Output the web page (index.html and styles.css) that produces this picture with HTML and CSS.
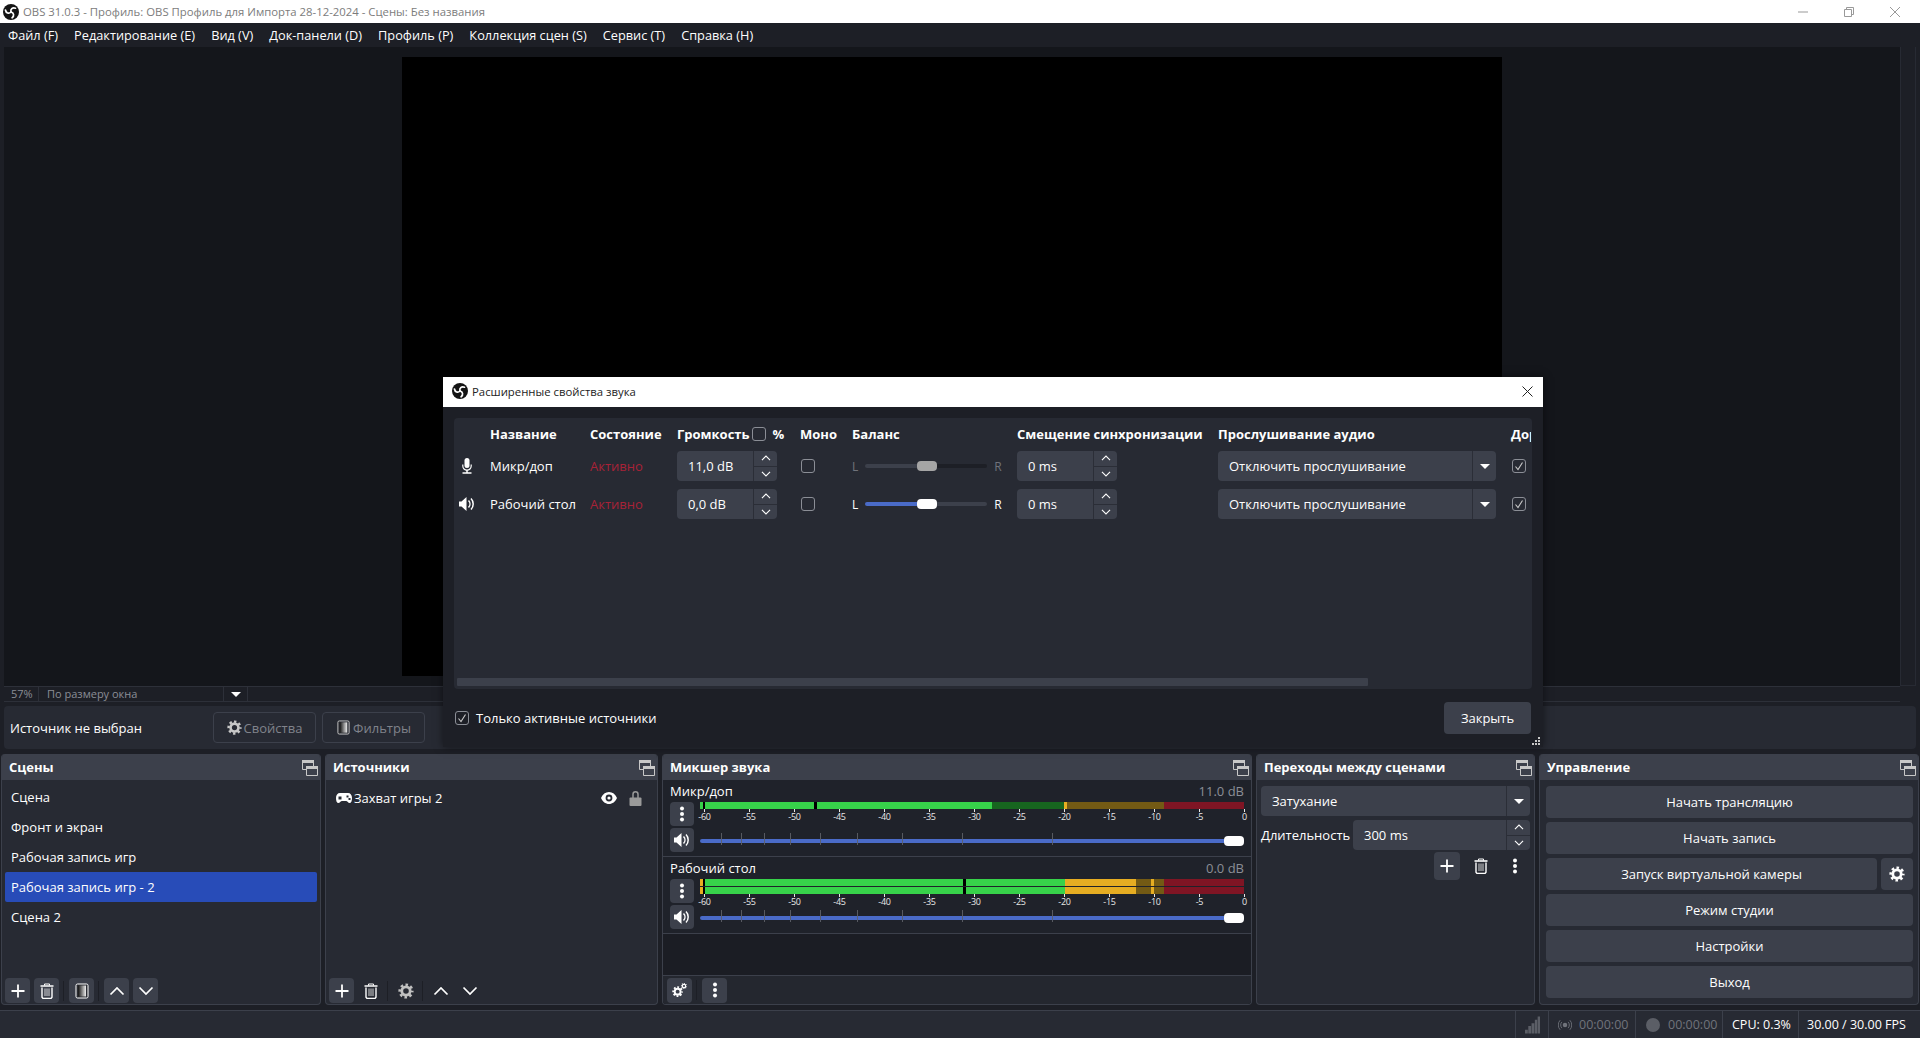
FILE: index.html
```html
<!DOCTYPE html>
<html lang="ru">
<head>
    <meta charset="UTF-8">
    <title>OBS 31.0.3</title>
    <link rel="stylesheet" href="styles.css">
</head>
<body>
    <svg class="sprites" xmlns="http://www.w3.org/2000/svg">
        <defs>
            <linearGradient id="filterFade" x1="0" x2="1" y1="0" y2="0">
                <stop offset="0" stop-color="#111"/>
                <stop offset="1" stop-color="#eee"/>
            </linearGradient>
            <symbol id="i-logo" viewBox="0 0 16 16">
                <circle cx="8" cy="8" r="8" fill="#141414"/>
                <g fill="none" stroke="#fff" stroke-width="1.700" stroke-linecap="round">
                    <path id="blade" d="M8 8C7.200 5.200 9.400 3 12.500 4.200"/>
                    <use href="#blade" transform="rotate(120 8 8)"/>
                    <use href="#blade" transform="rotate(240 8 8)"/>
                </g>
            </symbol>
            <symbol id="i-float" viewBox="0 0 16 16">
                <path d="M.5.5h11v9H.5z" fill="none" stroke="#c8c8c8"/>
                <path d="M0 0h12v3H0z" fill="#c8c8c8"/>
                <path d="M4.500 6.500h11v9h-11z" fill="#3c404b" stroke="#c8c8c8"/>
                <path d="M4 6h12v3H4z" fill="#c8c8c8"/>
            </symbol>
            <symbol id="i-gear" viewBox="0 0 16 16">
                <circle cx="8" cy="8" r="4.200" fill="none" stroke="currentColor" stroke-width="2.800"/>
                <circle cx="8" cy="8" r="6.300" fill="none" stroke="currentColor" stroke-width="2.600" stroke-dasharray="2.550 2.398" stroke-dashoffset="1.270"/>
            </symbol>
            <symbol id="i-gears" viewBox="0 0 20 20">
                <g transform="translate(0 5) scale(.88)">
                    <circle cx="8" cy="8" r="4.200" fill="none" stroke="currentColor" stroke-width="2.800"/>
                    <circle cx="8" cy="8" r="6.300" fill="none" stroke="currentColor" stroke-width="2.600" stroke-dasharray="2.550 2.398" stroke-dashoffset="1.270"/>
                </g>
                <g transform="translate(11 1) scale(.5)">
                    <circle cx="8" cy="8" r="4.200" fill="none" stroke="currentColor" stroke-width="2.800"/>
                    <circle cx="8" cy="8" r="6.300" fill="none" stroke="currentColor" stroke-width="2.600" stroke-dasharray="2.550 2.398" stroke-dashoffset="1.270"/>
                </g>
            </symbol>
            <symbol id="i-filter" viewBox="0 0 16 16">
                <rect x="2" y="1" width="12" height="14" rx="1.500" fill="#2a2c33" stroke="currentColor"/>
                <rect x="4" y="2.500" width="8" height="11" fill="url(#filterFade)"/>
            </symbol>
            <symbol id="i-plus" viewBox="0 0 16 16">
                <path d="M8 1.500v13M1.500 8h13" fill="none" stroke="currentColor" stroke-width="1.800"/>
            </symbol>
            <symbol id="i-trash" viewBox="0 0 16 16">
                <path d="M1.500 3h13" stroke="currentColor" stroke-width="1.600"/>
                <path d="M5.500 2.500V1h5v1.500" fill="none" stroke="currentColor"/>
                <path d="M3 4.500v9.800l1 1.200h8l1-1.200V4.500" fill="none" stroke="currentColor" stroke-width="1.400"/>
                <path d="M6 5.500v7.500M8 5.500v7.500M10 5.500v7.500" stroke="currentColor" stroke-width=".8"/>
            </symbol>
            <symbol id="i-up" viewBox="0 0 16 16">
                <path d="M1.500 11.500L8 5l6.500 6.500" fill="none" stroke="currentColor" stroke-width="1.700"/>
            </symbol>
            <symbol id="i-down" viewBox="0 0 16 16">
                <path d="M1.500 4.500L8 11l6.500-6.500" fill="none" stroke="currentColor" stroke-width="1.700"/>
            </symbol>
            <symbol id="i-dots" viewBox="0 0 16 16">
                <circle cx="8" cy="2.500" r="2" fill="currentColor"/>
                <circle cx="8" cy="8" r="2" fill="currentColor"/>
                <circle cx="8" cy="13.500" r="2" fill="currentColor"/>
            </symbol>
            <symbol id="i-speaker" viewBox="0 0 16 16">
                <path d="M0 5.500h2.500L7.500 1v14l-5-4.500H0z" fill="currentColor"/>
                <path d="M9.500 4.500a5 5 0 0 1 0 7M12 2.500a8 8 0 0 1 0 11" fill="none" stroke="currentColor" stroke-width="1.500"/>
            </symbol>
            <symbol id="i-mic" viewBox="0 0 16 16">
                <rect x="5.500" y="0" width="5" height="10" rx="2.500" fill="currentColor"/>
                <path d="M3.800 6.500v1.500a4.200 4.200 0 0 0 8.400 0V6.500" fill="none" stroke="currentColor" stroke-width="1.200"/>
                <path d="M8 12v2.500M3.500 15h9" stroke="currentColor" stroke-width="1.500"/>
            </symbol>
            <symbol id="i-eye" viewBox="0 0 16 12">
                <path fill-rule="evenodd" d="M8 0c3.500 0 6.400 2.300 8 6-1.600 3.700-4.500 6-8 6s-6.400-2.300-8-6c1.600-3.700 4.500-6 8-6zm0 2.600a3.400 3.400 0 1 0 0 6.800 3.400 3.400 0 0 0 0-6.800z" fill="currentColor"/>
                <circle cx="8" cy="6" r="1.600" fill="currentColor"/>
            </symbol>
            <symbol id="i-lock" viewBox="0 0 13 15">
                <path d="M4 7V3.300a2.500 2.500 0 0 1 5 0V7" fill="none" stroke="currentColor" stroke-width="1.500"/>
                <rect x="0.500" y="6.500" width="12" height="8.500" rx="1" fill="currentColor"/>
            </symbol>
            <symbol id="i-gamepad" viewBox="0 0 16 10">
                <path fill-rule="evenodd" d="M4 0h8c2.500 0 4 2 4 5s-.8 5-2.500 5c-1.400 0-2-2-3.500-2H6c-1.500 0-2.100 2-3.500 2C.8 10 0 8 0 5s1.500-5 4-5zM2.500 3.500v3h3v-3zM10.500 2.500v2h2v-2zM12.500 5v2h2V5z" fill="currentColor"/>
            </symbol>
            <symbol id="i-signal" viewBox="0 0 16 18">
                <path d="M0 14h3v4H0zM3.500 10h3v8h-3zM7 7h3v11H7zM10.500 3.500H13V18h-2.500zM13.500 0H16v18h-2.500z" fill="currentColor"/>
            </symbol>
            <symbol id="i-stream" viewBox="0 0 16 16">
                <circle cx="8" cy="8" r="2.600" fill="currentColor"/>
                <path d="M4.500 4.500a5 5 0 0 0 0 7M11.500 4.500a5 5 0 0 1 0 7M2.500 2.500a8 8 0 0 0 0 11M13.500 2.500a8 8 0 0 1 0 11" fill="none" stroke="currentColor"/>
            </symbol>
            <symbol id="i-check" viewBox="0 0 14 14">
                <path d="M3.500 7.500L6 10.500 10.500 3.500" fill="none" stroke="currentColor" stroke-width="1.100"/>
            </symbol>
        </defs>
    </svg>

    <div class="titlebar">
        <svg class="title-logo"><use href="#i-logo"/></svg>
        <span class="title-text">OBS 31.0.3 - Профиль: OBS Профиль для Импорта 28-12-2024 - Сцены: Без названия</span>
        <div class="window-btns">
            <span class="win-btn"><svg width="10" height="10"><path d="M0 5h10" stroke="#999"/></svg></span>
            <span class="win-btn"><svg width="10" height="10"><path d="M.5 2.500h7v7h-7zM2.500 2.500v-2h7v7h-2" fill="none" stroke="#999"/></svg></span>
            <span class="win-btn"><svg width="10" height="10"><path d="M0 0l10 10M10 0L0 10" stroke="#999"/></svg></span>
        </div>
    </div>

    <div class="menubar">
        <span>Файл (F)</span>
        <span>Редактирование (E)</span>
        <span>Вид (V)</span>
        <span>Док-панели (D)</span>
        <span>Профиль (P)</span>
        <span>Коллекция сцен (S)</span>
        <span>Сервис (T)</span>
        <span>Справка (H)</span>
    </div>

    <div class="preview">
        <div class="preview-area"><div class="canvas"></div></div>
        <div class="preview-scroll"></div>
    </div>

    <div class="scalebar">
        <span class="scale-pct">57%</span>
        <span class="scale-mode">По размеру окна</span>
        <span class="scale-arrow"><span class="caret"></span></span>
    </div>

    <div class="contextbar">
        <span class="context-label">Источник не выбран</span>
        <button class="context-btn"><svg class="icon-15"><use href="#i-gear"/></svg>Свойства</button>
        <button class="context-btn"><svg class="icon-15"><use href="#i-filter"/></svg>Фильтры</button>
    </div>

    <div class="docks">
        <section class="dock">
            <header class="dock-title">Сцены<svg class="float-icon"><use href="#i-float"/></svg></header>
            <div class="dock-body">
                <ul class="scene-list">
                    <li>Сцена</li>
                    <li>Фронт и экран</li>
                    <li>Рабочая запись игр</li>
                    <li class="selected">Рабочая запись игр - 2</li>
                    <li>Сцена 2</li>
                </ul>
                <div class="toolbar">
                    <span class="tool filled"><svg class="icon-16"><use href="#i-plus"/></svg></span>
                    <span class="tool filled"><svg class="icon-16"><use href="#i-trash"/></svg></span>
                    <span class="tool-sep"></span>
                    <span class="tool filled"><svg class="icon-16"><use href="#i-filter"/></svg></span>
                    <span class="tool-sep"></span>
                    <span class="tool filled"><svg class="icon-16"><use href="#i-up"/></svg></span>
                    <span class="tool filled"><svg class="icon-16"><use href="#i-down"/></svg></span>
                </div>
            </div>
        </section>

        <section class="dock">
            <header class="dock-title">Источники<svg class="float-icon"><use href="#i-float"/></svg></header>
            <div class="dock-body">
                <div class="source-list">
                    <div class="source-item">
                        <svg class="source-type"><use href="#i-gamepad"/></svg>
                        <span class="source-name">Захват игры 2</span>
                        <svg class="source-eye"><use href="#i-eye"/></svg>
                        <svg class="source-lock"><use href="#i-lock"/></svg>
                    </div>
                </div>
                <div class="toolbar">
                    <span class="tool filled"><svg class="icon-16"><use href="#i-plus"/></svg></span>
                    <span class="tool"><svg class="icon-16"><use href="#i-trash"/></svg></span>
                    <span class="tool-sep"></span>
                    <span class="tool"><svg class="icon-16 dim"><use href="#i-gear"/></svg></span>
                    <span class="tool-sep"></span>
                    <span class="tool"><svg class="icon-16"><use href="#i-up"/></svg></span>
                    <span class="tool"><svg class="icon-16"><use href="#i-down"/></svg></span>
                </div>
            </div>
        </section>

        <section class="dock">
            <header class="dock-title">Микшер звука<svg class="float-icon"><use href="#i-float"/></svg></header>
            <div class="dock-body mixer-body">
                <div class="strip">
                    <div class="strip-head"><span>Микр/доп</span><span class="strip-db">11.0 dB</span></div>
                    <div class="strip-grid">
                        <span class="strip-btn"><svg class="icon-16"><use href="#i-dots"/></svg></span>
                        <div class="meter-cell">
                            <div class="meter">
                                <div class="meter-row">
                                    <i class="seg green" style="width:3px"></i><i class="seg black" style="width:2px"></i>
                                    <i class="seg green" style="width:109px"></i><i class="seg black" style="width:3px"></i>
                                    <i class="seg green" style="width:175px"></i><i class="seg dgreen" style="width:72px"></i>
                                    <i class="seg yellow" style="width:3px"></i><i class="seg dyellow" style="width:97px"></i>
                                    <i class="seg dred" style="width:80px"></i>
                                </div>
                            </div>
                            <div class="scale">
                                <span>-60</span><span>-55</span><span>-50</span><span>-45</span><span>-40</span><span>-35</span>
                                <span>-30</span><span>-25</span><span>-20</span><span>-15</span><span>-10</span><span>-5</span><span>0</span>
                            </div>
                        </div>
                        <span class="strip-btn"><svg class="icon-16"><use href="#i-speaker"/></svg></span>
                        <div class="fader">
                            <div class="fader-track">
                                <i style="left:21px"></i><i style="left:41px"></i><i style="left:64px"></i>
                                <i style="left:90px"></i><i style="left:120px"></i><i style="left:157px"></i>
                                <i style="left:202px"></i><i style="left:262px"></i><i style="left:352px"></i>
                            </div>
                            <div class="fader-thumb"></div>
                        </div>
                    </div>
                </div>
                <div class="strip">
                    <div class="strip-head"><span>Рабочий стол</span><span class="strip-db">0.0 dB</span></div>
                    <div class="strip-grid">
                        <span class="strip-btn"><svg class="icon-16"><use href="#i-dots"/></svg></span>
                        <div class="meter-cell">
                            <div class="meter">
                                <div class="meter-row">
                                    <i class="seg yellow" style="width:3px"></i><i class="seg black" style="width:2px"></i>
                                    <i class="seg green" style="width:258px"></i><i class="seg black" style="width:3px"></i>
                                    <i class="seg green" style="width:99px"></i><i class="seg yellow" style="width:71px"></i>
                                    <i class="seg dyellow" style="width:15px"></i><i class="seg yellow" style="width:3px"></i>
                                    <i class="seg dyellow" style="width:10px"></i><i class="seg dred" style="width:80px"></i>
                                </div>
                                <div class="meter-row">
                                    <i class="seg yellow" style="width:3px"></i><i class="seg black" style="width:2px"></i>
                                    <i class="seg green" style="width:258px"></i><i class="seg black" style="width:3px"></i>
                                    <i class="seg green" style="width:99px"></i><i class="seg yellow" style="width:71px"></i>
                                    <i class="seg dyellow" style="width:15px"></i><i class="seg yellow" style="width:3px"></i>
                                    <i class="seg dyellow" style="width:10px"></i><i class="seg dred" style="width:80px"></i>
                                </div>
                            </div>
                            <div class="scale">
                                <span>-60</span><span>-55</span><span>-50</span><span>-45</span><span>-40</span><span>-35</span>
                                <span>-30</span><span>-25</span><span>-20</span><span>-15</span><span>-10</span><span>-5</span><span>0</span>
                            </div>
                        </div>
                        <span class="strip-btn"><svg class="icon-16"><use href="#i-speaker"/></svg></span>
                        <div class="fader">
                            <div class="fader-track">
                                <i style="left:21px"></i><i style="left:41px"></i><i style="left:64px"></i>
                                <i style="left:90px"></i><i style="left:120px"></i><i style="left:157px"></i>
                                <i style="left:202px"></i><i style="left:262px"></i><i style="left:352px"></i>
                            </div>
                            <div class="fader-thumb"></div>
                        </div>
                    </div>
                </div>
                <div class="mixer-empty"></div>
                <div class="toolbar mixer-toolbar">
                    <span class="tool filled"><svg class="icon-16"><use href="#i-gears"/></svg></span>
                    <span class="tool-sep"></span>
                    <span class="tool filled"><svg class="icon-16"><use href="#i-dots"/></svg></span>
                </div>
            </div>
        </section>

        <section class="dock">
            <header class="dock-title">Переходы между сценами<svg class="float-icon"><use href="#i-float"/></svg></header>
            <div class="dock-body transitions">
                <div class="combo"><span class="combo-text">Затухание</span><span class="combo-arrow"><span class="caret"></span></span></div>
                <div class="duration-row">
                    <span class="duration-label">Длительность</span>
                    <div class="spin spin-wide"><span class="spin-text">300 ms</span>
                        <span class="spin-btns"><span><svg class="icon-9"><use href="#i-up"/></svg></span><span><svg class="icon-9"><use href="#i-down"/></svg></span></span>
                    </div>
                </div>
                <div class="transition-tools">
                    <span class="tool filled tall"><svg class="icon-16"><use href="#i-plus"/></svg></span>
                    <span class="tool tall"><svg class="icon-16"><use href="#i-trash"/></svg></span>
                    <span class="tool tall"><svg class="icon-16"><use href="#i-dots"/></svg></span>
                </div>
            </div>
        </section>

        <section class="dock">
            <header class="dock-title">Управление<svg class="float-icon"><use href="#i-float"/></svg></header>
            <div class="dock-body controls">
                <button class="ctl-btn">Начать трансляцию</button>
                <button class="ctl-btn">Начать запись</button>
                <div class="ctl-row">
                    <button class="ctl-btn">Запуск виртуальной камеры</button>
                    <button class="ctl-btn ctl-gear"><svg class="icon-16"><use href="#i-gear"/></svg></button>
                </div>
                <button class="ctl-btn">Режим студии</button>
                <button class="ctl-btn">Настройки</button>
                <button class="ctl-btn">Выход</button>
            </div>
        </section>
    </div>

    <div class="statusbar">
        <span class="stat stat-signal"><svg class="signal-icon"><use href="#i-signal"/></svg></span>
        <span class="stat stat-stream dim-text"><svg class="icon-14"><use href="#i-stream"/></svg>00:00:00</span>
        <span class="stat stat-rec dim-text"><span class="rec-dot"></span>00:00:00</span>
        <span class="stat stat-cpu">CPU: 0.3%</span>
        <span class="stat stat-fps">30.00 / 30.00 FPS</span>
    </div>

    <div class="dialog">
        <div class="dialog-title">
            <svg class="title-logo"><use href="#i-logo"/></svg>
            <span>Расширенные свойства звука</span>
            <svg class="dialog-close" width="11" height="11"><path d="M.5.500l10 10M10.500.500l-10 10" stroke="#222"/></svg>
        </div>
        <div class="dialog-body">
            <div class="audio-panel">
                <div class="audio-table">
                    <span></span>
                    <b>Название</b>
                    <b>Состояние</b>
                    <b class="vol-head">Громкость<span class="check"></span><span class="pct">%</span></b>
                    <b class="mono-head">Моно</b>
                    <b>Баланс</b>
                    <b>Смещение синхронизации</b>
                    <b>Прослушивание аудио</b>
                    <b>Дорожки</b>

                    <svg class="row-icon"><use href="#i-mic"/></svg>
                    <span>Микр/доп</span>
                    <span class="active-state">Активно</span>
                    <div class="spin spin-vol"><span class="spin-text">11,0 dB</span>
                        <span class="spin-btns"><span><svg class="icon-9"><use href="#i-up"/></svg></span><span><svg class="icon-9"><use href="#i-down"/></svg></span></span>
                    </div>
                    <span class="check"></span>
                    <div class="balance off">
                        <span>L</span>
                        <div class="bal-slider"><i class="bal-fill"></i><i class="bal-thumb"></i><i class="bal-rest"></i></div>
                        <span>R</span>
                    </div>
                    <div class="spin spin-vol"><span class="spin-text">0 ms</span>
                        <span class="spin-btns"><span><svg class="icon-9"><use href="#i-up"/></svg></span><span><svg class="icon-9"><use href="#i-down"/></svg></span></span>
                    </div>
                    <div class="combo combo-monitor"><span class="combo-text">Отключить прослушивание</span><span class="combo-arrow"><span class="caret"></span></span></div>
                    <span class="check checked"><svg width="14" height="14"><use href="#i-check"/></svg></span>

                    <svg class="row-icon"><use href="#i-speaker"/></svg>
                    <span>Рабочий стол</span>
                    <span class="active-state">Активно</span>
                    <div class="spin spin-vol"><span class="spin-text">0,0 dB</span>
                        <span class="spin-btns"><span><svg class="icon-9"><use href="#i-up"/></svg></span><span><svg class="icon-9"><use href="#i-down"/></svg></span></span>
                    </div>
                    <span class="check"></span>
                    <div class="balance">
                        <span>L</span>
                        <div class="bal-slider"><i class="bal-fill"></i><i class="bal-thumb"></i><i class="bal-rest"></i></div>
                        <span>R</span>
                    </div>
                    <div class="spin spin-vol"><span class="spin-text">0 ms</span>
                        <span class="spin-btns"><span><svg class="icon-9"><use href="#i-up"/></svg></span><span><svg class="icon-9"><use href="#i-down"/></svg></span></span>
                    </div>
                    <div class="combo combo-monitor"><span class="combo-text">Отключить прослушивание</span><span class="combo-arrow"><span class="caret"></span></span></div>
                    <span class="check checked"><svg width="14" height="14"><use href="#i-check"/></svg></span>
                </div>
                <div class="audio-scroll"></div>
            </div>
            <div class="dialog-footer">
                <label class="active-only"><span class="check checked"><svg width="14" height="14"><use href="#i-check"/></svg></span>Только активные источники</label>
                <button class="close-btn">Закрыть</button>
            </div>
        </div>
        <svg class="grip" width="8" height="8"><path d="M6 0h2v2H6zM3 3h2v2H3zM6 3h2v2H6zM0 6h2v2H0zM3 6h2v2H3zM6 6h2v2H6z" fill="#c8c8c8"/></svg>
    </div>
</body>
</html>
```
FILE: styles.css
```css
* {
    box-sizing: border-box;
}

html, body {
    height: 100%;
}

body {
    margin: 0;
    width: 1920px;
    height: 1038px;
    overflow: hidden;
    display: flex;
    flex-direction: column;
    position: relative;
    background-color: #1d1f26;
    color: #fefefe;
    font-family: "Open Sans", "Noto Sans", sans-serif;
    font-size: 13px;
}

.sprites {
    position: absolute;
    width: 0;
    height: 0;
}

ul {
    list-style: none;
    margin: 0;
    padding: 0;
}

button {
    font: inherit;
    color: inherit;
    border: none;
}

svg {
    flex-shrink: 0;
}

.icon-16 { width: 16px; height: 16px; }
.icon-15 { width: 15px; height: 15px; }
.icon-14 { width: 14px; height: 14px; }
.icon-9 { width: 10px; height: 10px; }
.dim { color: #c0c0c0; }

.caret {
    display: block;
    width: 0;
    height: 0;
    border-left: 5px solid transparent;
    border-right: 5px solid transparent;
    border-top: 5px solid #fefefe;
}

/* window chrome */
.titlebar {
    height: 23px;
    flex: none;
    display: flex;
    align-items: center;
    padding-left: 3px;
    background-color: #fff;
    color: #7c7c7c;
    font-size: 11.35px;
}

.title-logo {
    width: 16px;
    height: 16px;
    margin-right: 4px;
}

.title-text {
    flex: 1;
}

.window-btns {
    display: flex;
    padding-right: 2px;
}

.win-btn {
    width: 46px;
    height: 20px;
    display: flex;
    align-items: center;
    justify-content: center;
}

.menubar {
    height: 24px;
    flex: none;
    display: flex;
    align-items: center;
    gap: 16px;
    padding-left: 8px;
    font-size: 12.75px;
}

/* preview */
.preview {
    height: 639px;
    flex: none;
    display: flex;
    padding: 0 4px;
}

.preview-area {
    flex: 1;
    display: flex;
    align-items: center;
    justify-content: center;
    background-color: #14161b;
}

.canvas {
    width: 1100px;
    height: 619px;
    background-color: #000;
}

.preview-scroll {
    width: 16px;
    border: 1px solid #272a33;
    border-top: none;
}

.scalebar {
    height: 16px;
    flex: none;
    display: flex;
    align-items: center;
    margin: 0 20px 0 4px;
    border-top: 1px solid #2d3039;
    border-bottom: 1px solid #2d3039;
    color: #8b8e96;
    font-size: 11px;
}

.scale-pct {
    width: 35px;
    padding-left: 7px;
    border-right: 1px solid #2d3039;
    line-height: 14px;
}

.scale-mode {
    width: 185px;
    padding-left: 8px;
    border-right: 1px solid #2d3039;
    line-height: 14px;
}

.scale-arrow {
    width: 24px;
    height: 14px;
    display: flex;
    align-items: center;
    justify-content: center;
    border-right: 1px solid #2d3039;
}

.contextbar {
    height: 43px;
    flex: none;
    display: flex;
    align-items: center;
    gap: 6px;
    margin: 4px 4px 0;
    padding-left: 6px;
    background-color: #272a33;
    border-radius: 4px;
}

.context-label {
    width: 197px;
}

.context-btn {
    width: 103px;
    height: 31px;
    display: flex;
    align-items: center;
    justify-content: center;
    gap: 2px;
    background: transparent;
    border: 1px solid #3c404b;
    border-radius: 4px;
    color: #80838b;
}

.context-btn svg {
    color: #c8c8c8;
}

/* docks */
.docks {
    height: 251px;
    flex: none;
    margin: 5px 1px 0;
    display: grid;
    grid-template-columns: 320px 333px 590px 279px 380px;
    column-gap: 4px;
}

.dock {
    display: flex;
    flex-direction: column;
    border: 1px solid #3c404b;
    border-top: none;
    border-radius: 4px;
    background-color: #272a33;
    overflow: hidden;
}

.dock-title {
    height: 26px;
    flex: none;
    display: flex;
    align-items: center;
    justify-content: space-between;
    margin: 0 -1px;
    padding: 0 3px 0 8px;
    background-color: #3c404b;
    font-weight: 700;
    font-size: 13px;
}

.float-icon {
    width: 16px;
    height: 16px;
    margin-top: 2px;
}

.dock-body {
    flex: 1;
    display: flex;
    flex-direction: column;
    min-height: 0;
}

.toolbar {
    height: 27px;
    flex: none;
    display: flex;
    align-items: center;
    gap: 4px;
    padding-left: 3px;
    margin-top: auto;
}

.tool {
    width: 25px;
    height: 25px;
    display: flex;
    align-items: center;
    justify-content: center;
    border-radius: 4px;
}

.tool.filled {
    background-color: #3c404b;
}

.tool.tall {
    width: 26px;
    height: 28px;
}

.tool-sep {
    width: 1px;
    height: 20px;
    margin-right: 1px;
    background-color: #1d1f26;
}

.scene-list {
    padding: 2px 3px 0;
}

.scene-list li {
    height: 30px;
    display: flex;
    align-items: center;
    padding-left: 6px;
    border-radius: 2px;
}

.scene-list .selected {
    background-color: #284cb8;
}

.source-item {
    height: 30px;
    margin-top: 3px;
    display: flex;
    align-items: center;
    padding: 0 15px 0 10px;
}

.source-type {
    width: 16px;
    height: 10px;
    margin-right: 2px;
}

.source-name {
    flex: 1;
}

.source-eye {
    width: 16px;
    height: 12px;
}

.source-lock {
    width: 13px;
    height: 15px;
    margin-left: 12px;
    color: #9a9a9a;
}

/* mixer */
.mixer-body {
    background-color: #1f222a;
}

.strip {
    height: 77px;
    flex: none;
    padding: 0 7px;
    border-bottom: 1px solid #3c404b;
}

.strip-head {
    height: 22px;
    display: flex;
    align-items: center;
    justify-content: space-between;
}

.strip-db {
    color: #8b8e96;
}

.strip-grid {
    display: grid;
    grid-template-columns: 24px 544px;
    grid-template-rows: 24px 24px;
    column-gap: 6px;
    row-gap: 2px;
}

.strip-btn {
    display: flex;
    align-items: center;
    justify-content: center;
    background-color: #3c404b;
    border-radius: 4px;
}

.meter-cell {
    display: flex;
    flex-direction: column;
}

.meter {
    display: flex;
    flex-direction: column;
    gap: 1px;
}

.meter-row {
    height: 7px;
    display: flex;
}

.seg { display: block; height: 100%; }
.seg.green { background-color: #37d24a; }
.seg.dgreen { background-color: #17651f; }
.seg.yellow { background-color: #e6ad22; }
.seg.dyellow { background-color: #735a14; }
.seg.dred { background-color: #7f1524; }
.seg.black { background-color: #000; }

.scale {
    display: flex;
    margin-left: -18px;
    width: 585px;
    font-size: 9px;
    line-height: 9px;
    color: #e8e8e8;
    letter-spacing: -.2px;
}

.scale span {
    width: 45px;
    text-align: center;
}

.scale span::before {
    content: "";
    display: block;
    width: 1px;
    height: 3px;
    margin: 0 auto;
    background-color: #e8e8e8;
}

.fader {
    display: flex;
    align-items: center;
    padding-top: 2px;
}

.fader-track {
    flex: 1;
    height: 4px;
    position: relative;
    background-color: #4a6bc8;
    border-radius: 2px 0 0 2px;
}

.fader-track i {
    position: absolute;
    top: -6px;
    width: 1px;
    height: 12px;
    background-color: #5d6068;
    opacity: .9;
}

.fader-thumb {
    width: 20px;
    height: 10px;
    background-color: #fefefe;
    border-radius: 4px;
}

.mixer-empty {
    flex: 1;
    background-color: #1b1d24;
}

.mixer-toolbar {
    height: 29px;
    gap: 4px;
    padding: 0 0 0 4px;
    background-color: #24272f;
    border-top: 1px solid #3c404b;
}

/* transitions */
.transitions {
    padding: 6px 4px 0;
}

.combo {
    height: 30px;
    display: flex;
    align-items: center;
    background-color: #3c404b;
    border-radius: 4px;
}

.combo-text {
    flex: 1;
    padding-left: 11px;
}

.combo-arrow {
    width: 24px;
    height: 100%;
    display: flex;
    align-items: center;
    justify-content: center;
    border-left: 1px solid #2b2e37;
}

.duration-row {
    display: flex;
    align-items: center;
    margin-top: 4px;
}

.duration-label {
    width: 92px;
}

.spin {
    height: 30px;
    display: flex;
    background-color: #3c404b;
    border-radius: 4px;
}

.spin-wide {
    flex: 1;
}

.spin-text {
    flex: 1;
    display: flex;
    align-items: center;
    padding-left: 11px;
}

.spin-btns {
    width: 24px;
    display: flex;
    flex-direction: column;
    border-left: 1px solid #2b2e37;
}

.spin-btns span {
    flex: 1;
    display: flex;
    align-items: center;
    justify-content: center;
}

.spin-btns span:first-child {
    border-bottom: 1px solid #2b2e37;
}

.transition-tools {
    display: flex;
    justify-content: flex-end;
    align-items: center;
    gap: 8px;
    margin-top: 2px;
    padding-right: 2px;
}

/* controls */
.controls {
    padding: 6px 5px 0 6px;
    gap: 4px;
}

.ctl-btn {
    height: 32px;
    width: 100%;
    background-color: #3c404b;
    border-radius: 4px;
    padding: 0;
}

.ctl-row {
    display: flex;
    gap: 4px;
}

.ctl-gear {
    width: 32px;
    flex: none;
    display: flex;
    align-items: center;
    justify-content: center;
}

/* status */
.statusbar {
    height: 28px;
    flex: none;
    margin-top: 5px;
    display: flex;
    justify-content: flex-end;
    background-color: #272a33;
    border-top: 1px solid #3c404b;
    font-size: 12.5px;
}

.stat {
    display: flex;
    align-items: center;
    border-left: 1px solid #3c404b;
}

.dim-text {
    color: #70737b;
}

.stat-signal {
    width: 33px;
    justify-content: center;
    color: #5b5e66;
}

.signal-icon {
    width: 15px;
    height: 18px;
}

.stat-stream {
    width: 87px;
    padding-left: 9px;
    gap: 7px;
}

.stat-rec {
    width: 87px;
    padding-left: 10px;
    gap: 8px;
}

.rec-dot {
    width: 14px;
    height: 14px;
    border-radius: 50%;
    background-color: #5b5e66;
}

.stat-cpu {
    width: 76px;
    padding-left: 9px;
}

.stat-fps {
    width: 122px;
    padding-left: 8px;
}

/* advanced audio dialog, floats over the main window */
.dialog {
    position: absolute;
    left: 443px;
    top: 377px;
    width: 1100px;
    height: 370px;
    display: flex;
    flex-direction: column;
    background-color: #1d1f26;
    box-shadow: 0 0 8px rgba(0, 0, 0, .5);
}

.dialog-title {
    height: 30px;
    flex: none;
    display: flex;
    align-items: center;
    padding: 0 0 2px 9px;
    background-color: #fff;
    color: #222;
    font-size: 11.35px;
}

.dialog-close {
    margin-left: auto;
    margin-right: 10px;
}

.dialog-body {
    flex: 1;
    display: flex;
    flex-direction: column;
    padding: 11px 11px 13px;
}

.audio-panel {
    height: 271px;
    flex: none;
    display: flex;
    flex-direction: column;
    background-color: #272a33;
    border-radius: 4px;
    overflow: hidden;
}

.audio-table {
    flex: 1;
    display: grid;
    grid-template-columns: 36px 100px 87px 124px 51px 165px 201px 293px 60px;
    grid-template-rows: 18px 30px 30px;
    row-gap: 8px;
    padding-top: 7px;
    align-items: center;
    align-content: start;
    width: 1077px;
    overflow: hidden;
}

.audio-table b {
    white-space: nowrap;
    font-weight: 700;
}

.mono-head {
    margin-left: -1px;
}

.vol-head {
    display: flex;
    align-items: center;
}

.vol-head .check {
    margin-left: 2px;
}

.pct {
    margin-left: 7px;
}

.check {
    width: 14px;
    height: 14px;
    flex: none;
    display: block;
    border: 1px solid #8b8e96;
    border-radius: 3px;
    background-color: #272a33;
    color: #c8c8c8;
}

.audio-table > .check.checked {
    margin-left: 1px;
}

.check.checked svg {
    display: block;
    margin: -1px;
}

.row-icon {
    width: 16px;
    height: 16px;
    margin-left: 5px;
}

.active-state {
    color: #a82237;
}

.spin-vol {
    width: 100px;
}

.balance {
    display: flex;
    align-items: center;
    font-size: 12px;
}

.balance.off {
    color: #70737b;
}

.bal-slider {
    width: 122px;
    margin: 0 7px 0 7px;
    display: flex;
    align-items: center;
}

.bal-fill, .bal-rest {
    display: block;
    height: 4px;
}

.bal-fill {
    width: 52px;
    background-color: #4a6bc8;
    border-radius: 2px 0 0 2px;
}

.bal-thumb {
    display: block;
    width: 20px;
    height: 10px;
    border-radius: 4px;
    background-color: #fefefe;
}

.bal-rest {
    flex: 1;
    background-color: #3c404b;
    border-radius: 0 2px 2px 0;
}

.off .bal-fill {
    background-color: #3c404b;
}

.off .bal-thumb {
    background-color: #a5a5a5;
}

.off .bal-rest {
    background-color: #1d1f26;
}

.combo-monitor {
    width: 278px;
}

.audio-scroll {
    width: 911px;
    height: 8px;
    flex: none;
    margin: 0 0 3px 3px;
    background-color: #3c404b;
    border-radius: 1px;
}

.dialog-footer {
    display: flex;
    align-items: center;
    justify-content: space-between;
    margin-top: 13px;
    padding-right: 1px;
}

.active-only {
    display: flex;
    align-items: center;
    gap: 7px;
    margin-left: 1px;
    margin-bottom: 1px;
}

.active-only .check {
    background-color: transparent;
}

.close-btn {
    width: 87px;
    height: 32px;
    background-color: #3c404b;
    border-radius: 4px;
}

.grip {
    position: absolute;
    right: 3px;
    bottom: 2px;
}
```
